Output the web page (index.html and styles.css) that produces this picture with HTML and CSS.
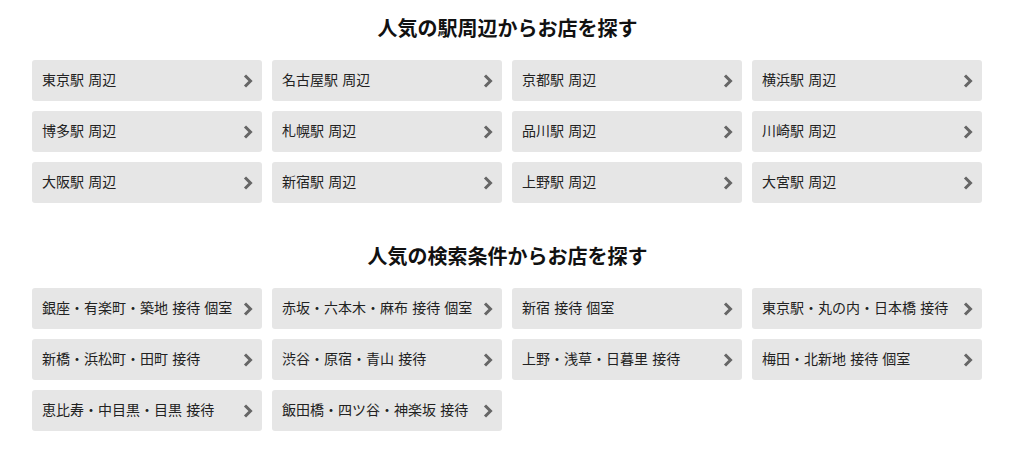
FILE: index.html
```html
<!DOCTYPE html>
<html lang="ja">
<head>
<meta charset="utf-8">
<title>お店を探す</title>
<link rel="stylesheet" href="styles.css">
</head>
<body>
<main class="page">
  <section class="section">
    <h2 class="title">人気の駅周辺からお店を探す</h2>
    <ul class="grid">
      <li><a class="card" href="#"><span class="label">東京駅 周辺</span><svg class="chev" viewBox="0 0 10 14"><polyline points="2,1.5 7.5,7 2,12.5"/></svg></a></li>
      <li><a class="card" href="#"><span class="label">名古屋駅 周辺</span><svg class="chev" viewBox="0 0 10 14"><polyline points="2,1.5 7.5,7 2,12.5"/></svg></a></li>
      <li><a class="card" href="#"><span class="label">京都駅 周辺</span><svg class="chev" viewBox="0 0 10 14"><polyline points="2,1.5 7.5,7 2,12.5"/></svg></a></li>
      <li><a class="card" href="#"><span class="label">横浜駅 周辺</span><svg class="chev" viewBox="0 0 10 14"><polyline points="2,1.5 7.5,7 2,12.5"/></svg></a></li>
      <li><a class="card" href="#"><span class="label">博多駅 周辺</span><svg class="chev" viewBox="0 0 10 14"><polyline points="2,1.5 7.5,7 2,12.5"/></svg></a></li>
      <li><a class="card" href="#"><span class="label">札幌駅 周辺</span><svg class="chev" viewBox="0 0 10 14"><polyline points="2,1.5 7.5,7 2,12.5"/></svg></a></li>
      <li><a class="card" href="#"><span class="label">品川駅 周辺</span><svg class="chev" viewBox="0 0 10 14"><polyline points="2,1.5 7.5,7 2,12.5"/></svg></a></li>
      <li><a class="card" href="#"><span class="label">川崎駅 周辺</span><svg class="chev" viewBox="0 0 10 14"><polyline points="2,1.5 7.5,7 2,12.5"/></svg></a></li>
      <li><a class="card" href="#"><span class="label">大阪駅 周辺</span><svg class="chev" viewBox="0 0 10 14"><polyline points="2,1.5 7.5,7 2,12.5"/></svg></a></li>
      <li><a class="card" href="#"><span class="label">新宿駅 周辺</span><svg class="chev" viewBox="0 0 10 14"><polyline points="2,1.5 7.5,7 2,12.5"/></svg></a></li>
      <li><a class="card" href="#"><span class="label">上野駅 周辺</span><svg class="chev" viewBox="0 0 10 14"><polyline points="2,1.5 7.5,7 2,12.5"/></svg></a></li>
      <li><a class="card" href="#"><span class="label">大宮駅 周辺</span><svg class="chev" viewBox="0 0 10 14"><polyline points="2,1.5 7.5,7 2,12.5"/></svg></a></li>
    </ul>
  </section>
  <section class="section">
    <h2 class="title">人気の検索条件からお店を探す</h2>
    <ul class="grid">
      <li><a class="card" href="#"><span class="label">銀座・有楽町・築地 接待 個室</span><svg class="chev" viewBox="0 0 10 14"><polyline points="2,1.5 7.5,7 2,12.5"/></svg></a></li>
      <li><a class="card" href="#"><span class="label">赤坂・六本木・麻布 接待 個室</span><svg class="chev" viewBox="0 0 10 14"><polyline points="2,1.5 7.5,7 2,12.5"/></svg></a></li>
      <li><a class="card" href="#"><span class="label">新宿 接待 個室</span><svg class="chev" viewBox="0 0 10 14"><polyline points="2,1.5 7.5,7 2,12.5"/></svg></a></li>
      <li><a class="card" href="#"><span class="label">東京駅・丸の内・日本橋 接待</span><svg class="chev" viewBox="0 0 10 14"><polyline points="2,1.5 7.5,7 2,12.5"/></svg></a></li>
      <li><a class="card" href="#"><span class="label">新橋・浜松町・田町 接待</span><svg class="chev" viewBox="0 0 10 14"><polyline points="2,1.5 7.5,7 2,12.5"/></svg></a></li>
      <li><a class="card" href="#"><span class="label">渋谷・原宿・青山 接待</span><svg class="chev" viewBox="0 0 10 14"><polyline points="2,1.5 7.5,7 2,12.5"/></svg></a></li>
      <li><a class="card" href="#"><span class="label">上野・浅草・日暮里 接待</span><svg class="chev" viewBox="0 0 10 14"><polyline points="2,1.5 7.5,7 2,12.5"/></svg></a></li>
      <li><a class="card" href="#"><span class="label">梅田・北新地 接待 個室</span><svg class="chev" viewBox="0 0 10 14"><polyline points="2,1.5 7.5,7 2,12.5"/></svg></a></li>
      <li><a class="card" href="#"><span class="label">恵比寿・中目黒・目黒 接待</span><svg class="chev" viewBox="0 0 10 14"><polyline points="2,1.5 7.5,7 2,12.5"/></svg></a></li>
      <li><a class="card" href="#"><span class="label">飯田橋・四ツ谷・神楽坂 接待</span><svg class="chev" viewBox="0 0 10 14"><polyline points="2,1.5 7.5,7 2,12.5"/></svg></a></li>
    </ul>
  </section>
</main>
</body>
</html>
```
FILE: styles.css
```css
html, body {
  margin: 0;
  padding: 0;
  background: #ffffff;
}
body {
  font-family: "Noto Sans CJK JP", "Noto Sans", sans-serif;
  color: #222222;
}
.page {
  width: 950px;
  margin-left: 32px;
}
.section {
  padding-top: 13px;
  margin-bottom: 25px;
}
.title {
  margin: 0 0 17px;
  font-size: 20px;
  line-height: 30px;
  font-weight: 700;
  text-align: center;
  color: #111111;
  padding-left: 1px;
}
.grid {
  list-style: none;
  margin: 0;
  padding: 0;
  display: grid;
  grid-template-columns: repeat(4, 230px);
  column-gap: 10px;
  row-gap: 10px;
}
.card {
  display: flex;
  align-items: center;
  justify-content: space-between;
  height: 41px;
  box-sizing: border-box;
  padding: 0 9px 0 10px;
  background: #e6e6e6;
  border-radius: 3px;
  text-decoration: none;
  color: #222222;
}
.label {
  font-size: 14px;
  line-height: 20px;
  margin-bottom: 3px;
  white-space: nowrap;
  word-spacing: 1px;
}
.chev {
  flex: none;
  width: 10px;
  height: 14px;
  margin-left: 4px;
}
.chev polyline {
  fill: none;
  stroke: #666666;
  stroke-width: 3;
  stroke-linecap: butt;
  stroke-linejoin: miter;
}
```
